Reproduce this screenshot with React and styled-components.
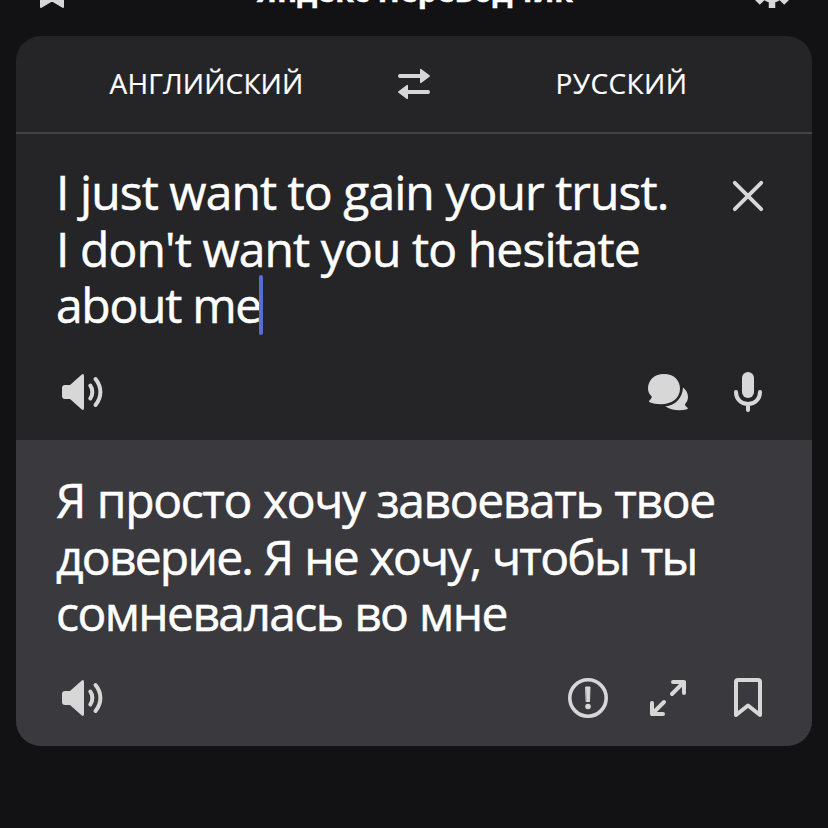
import React from "react";
import styled, { createGlobalStyle } from "styled-components";

const GlobalStyle = createGlobalStyle`
  body {
    margin: 0;
    background: #121214;
    color: #ffffff;
    font-family: "Open Sans", "Noto Sans", sans-serif;
  }
`;

const Screen = styled.div`
  box-sizing: border-box;
  width: 828px;
  height: 828px;
  padding: 0 16px;
  overflow: hidden;
`;

const TopBar = styled.header`
  box-sizing: border-box;
  display: flex;
  align-items: flex-end;
  justify-content: space-between;
  height: 36px;
  padding: 0 20px 28px 24px;
`;

const Title = styled.h1`
  flex: none;
  margin: 0 0 -3px 14px;
  font-size: 30px;
  line-height: 40px;
  font-weight: 700;
  white-space: nowrap;
  letter-spacing: 0.15px;
  -webkit-text-stroke: 0.5px #ffffff;
`;

const Icon = styled.svg`
  display: block;
  flex: none;
  width: ${(p) => p.$w || 40}px;
  height: ${(p) => p.$h || 40}px;
  fill: none;
  stroke: #d7d7d8;
  stroke-width: 4;
  stroke-linecap: round;
  stroke-linejoin: round;
`;

const Card = styled.main`
  border-radius: 25px;
  overflow: hidden;
  background: #252527;
`;

const Languages = styled.div`
  display: grid;
  grid-template-columns: 381px 34px 381px;
  align-items: center;
  height: 96px;
  border-bottom: 2px solid #434346;
`;

const Language = styled.div`
  padding-bottom: 2px;
  font-size: 28px;
  line-height: 40px;
  text-align: center;
  letter-spacing: ${(p) => p.$spacing}px;
  -webkit-text-stroke: 0.2px #ffffff;
`;

const Panel = styled.section`
  box-sizing: border-box;
  display: flex;
  flex-direction: column;
  justify-content: space-between;
  height: 306px;
  padding: ${(p) => (p.$translated ? "32px 44px 28px 40px" : "30px 44px 28px 40px")};
  background: ${(p) => (p.$translated ? "#3a393d" : "transparent")};
`;

const TextRow = styled.div`
  display: flex;
  justify-content: space-between;
`;

const Text = styled.div`
  font-size: 48px;
  line-height: 56.5px;
  -webkit-text-stroke: 0.5px #ffffff;
`;

const Line = styled.div`
  white-space: nowrap;
  letter-spacing: ${(p) => p.$spacing || 0}px;
  word-spacing: ${(p) => p.$words || 0}px;
`;

const Caret = styled.span`
  display: inline-block;
  width: 4px;
  height: 60px;
  margin: -10px 0 -14px -2px;
  vertical-align: 2px;
  border-radius: 2px;
  background: #5a6ccf;
`;

const CloseButton = styled.div`
  margin-top: 12px;
`;

const Tools = styled.div`
  display: flex;
  align-items: center;
  justify-content: space-between;
  padding-left: 4px;
`;

const ToolGroup = styled.div`
  display: flex;
  gap: 40px;
`;

function SpeakerIcon() {
  return (
    <Icon $w={44} viewBox="0 0 44 40">
      <path
        d="M2 16q0-3 3-3h5L21.500 2.700Q24 1 24 4v32q0 3-2.500 1.300L10 27H5q-3 0-3-3z"
        fill="#d7d7d8"
        stroke="none"
      />
      <path d="M30.300 13.500c2.700 3.500 2.700 9.500 0 13M35.500 7c6.500 8 6.500 18 0 26" />
    </Icon>
  );
}

function Lines({ items, caret }) {
  return (
    <Text>
      {items.map(([text, spacing, words], i) => (
        <Line key={text} $spacing={spacing} $words={words}>
          {text}
          {caret && i === items.length - 1 && <Caret />}
        </Line>
      ))}
    </Text>
  );
}

const source = [
  ["I just want to gain your trust.", -0.93],
  ["I don't want you to hesitate", -0.9],
  ["about me", -1.3],
];

const translation = [
  ["Я просто хочу завоевать твое", -1.38, 0.8],
  ["доверие. Я не хочу, чтобы ты", -1.78, 1],
  ["сомневалась во мне", -1.6, 0.8],
];

export default function App() {
  return (
    <>
      <GlobalStyle />
      <Screen>
        <TopBar>
          <Icon $w={24} $h={32} viewBox="0 0 24 32">
            <path d="M1 0h22v31L12 24.500 1 31z" fill="#d7d7d8" stroke="#d7d7d8" strokeWidth="2" />
          </Icon>
          <Title>Яндекс Переводчик</Title>
          <Icon viewBox="0 0 40 40">
            <circle cx="20" cy="20" r="10.500" strokeWidth="8" />
            <path
              d="M20 5V3M20 35v2M5 20H3M35 20h2M9.400 9.400L7.800 7.800M30.600 30.600l1.600 1.600M9.400 30.600l-1.600 1.600M30.600 9.400l1.600-1.600"
              strokeWidth="6.500"
              strokeLinecap="square"
            />
          </Icon>
        </TopBar>
        <Card>
          <Languages>
            <Language $spacing={0.15}>АНГЛИЙСКИЙ</Language>
            <Icon $w={34} $h={32} viewBox="0 0 34 32">
              <path d="M3 8h22M31 24H9" />
              <path
                d="M23 2q0-1.800 1.500-.8l8 6q1 .8 0 1.600l-8 6q-1.500 1-1.500-.8zM11 18q0-1.800-1.500-.8l-8 6q-1 .8 0 1.600l8 6q1.500 1 1.500-.8z"
                fill="#d7d7d8"
                stroke="none"
              />
            </Icon>
            <Language $spacing={0.4}>РУССКИЙ</Language>
          </Languages>
          <Panel>
            <TextRow>
              <Lines items={source} caret />
              <CloseButton>
                <Icon viewBox="0 0 40 40">
                  <path d="M6.800 6.800l26.400 26.400M33.200 6.800L6.800 33.200" strokeWidth="3.800" />
                </Icon>
              </CloseButton>
            </TextRow>
            <Tools>
              <SpeakerIcon />
              <ToolGroup>
                <Icon viewBox="0 0 40 40">
                  <path
                    d="M16 2c9.500 0 16 6 16 14.500C32 26 24 32.200 13 32.200c-4.500 0-8.500-.7-11.300-2-.9-.4-.8-1.200-.2-1.800 1.300-1.200 2.200-2.500 2.300-4C1.300 22.500 0 19.700 0 16.500 0 8 6.500 2 16 2z"
                    fill="#d7d7d8"
                    stroke="none"
                  />
                  <path
                    d="M35 15.500c3 2.300 5 5.500 5 9.500 0 2.800-1.200 5.200-3 7.200.1 1.300 1 2.400 2.300 3.300.8.600.6 1.600-.3 1.800-8 2-16.500.7-21.700-3.100C27.500 33.500 34.500 26 35 15.500z"
                    fill="#d7d7d8"
                    stroke="none"
                  />
                </Icon>
                <Icon viewBox="0 0 40 40">
                  <rect x="14" y="0" width="12" height="26" rx="6" fill="#d7d7d8" stroke="none" />
                  <path d="M8 20c0 7 5 12 12 12s12-5 12-12M20 32v6" />
                </Icon>
              </ToolGroup>
            </Tools>
          </Panel>
          <Panel $translated>
            <Lines items={translation} />
            <Tools>
              <SpeakerIcon />
              <ToolGroup>
                <Icon viewBox="0 0 40 40">
                  <circle cx="20" cy="20" r="18.200" strokeWidth="3.600" />
                  <path d="M18 9h4l-.5 14.500h-3z" fill="#d7d7d8" strokeWidth="1" />
                  <circle cx="20" cy="28.500" r="2.800" fill="#d7d7d8" stroke="none" />
                </Icon>
                <Icon viewBox="0 0 40 40">
                  <path d="M24 16L36 4M25 4h11v11M16 24L4 36M4 25v11h11" />
                </Icon>
                <Icon viewBox="0 0 40 40">
                  <path d="M8 37V4q0-2 2-2h20q2 0 2 2v33L20 27.500z" />
                </Icon>
              </ToolGroup>
            </Tools>
          </Panel>
        </Card>
      </Screen>
    </>
  );
}
